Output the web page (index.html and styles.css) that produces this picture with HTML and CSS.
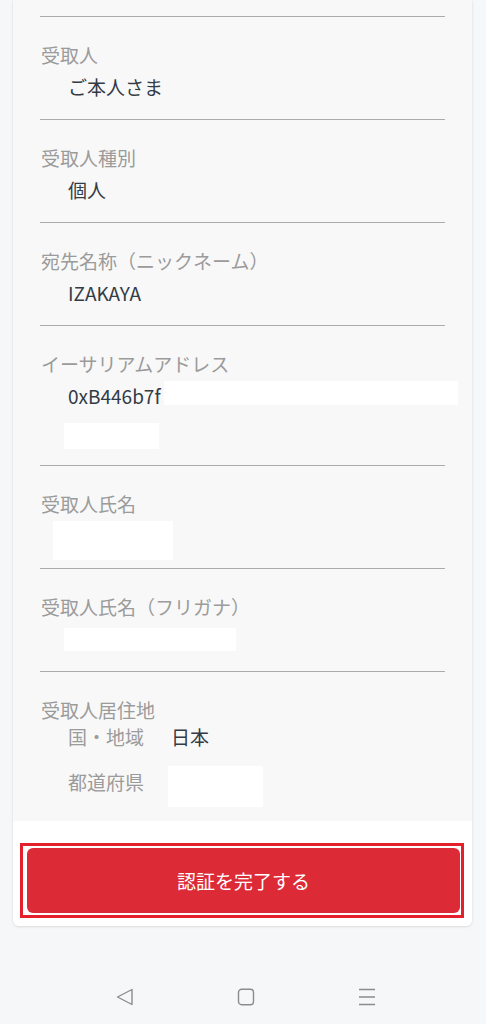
FILE: index.html
```html
<!DOCTYPE html>
<html lang="ja">
<head>
<meta charset="utf-8">
<title>認証</title>
<link rel="stylesheet" href="styles.css">
</head>
<body>
<main class="card">
  <div class="fields">
    <section class="field">
      <div class="label">受取人</div>
      <div class="value">ご本人さま</div>
    </section>
    <section class="field">
      <div class="label">受取人種別</div>
      <div class="value">個人</div>
    </section>
    <section class="field">
      <div class="label">宛先名称（ニックネーム）</div>
      <div class="value">IZAKAYA</div>
    </section>
    <section class="field">
      <div class="label">イーサリアムアドレス</div>
      <div class="value value-address">
        <div class="addr-line"><span>0xB446b7f</span><span class="redact redact-addr1"></span></div>
        <span class="redact redact-addr2"></span>
      </div>
    </section>
    <section class="field">
      <div class="label">受取人氏名</div>
      <span class="redact redact-name"></span>
    </section>
    <section class="field">
      <div class="label">受取人氏名（フリガナ）</div>
      <span class="redact redact-kana"></span>
    </section>
    <section class="field field-residence">
      <div class="label">受取人居住地</div>
      <div class="sub-row">
        <span class="sub-key">国・地域</span>
        <span class="sub-value">日本</span>
      </div>
      <div class="sub-row sub-row-pref">
        <span class="sub-key">都道府県</span>
        <span class="redact redact-pref"></span>
      </div>
    </section>
  </div>
  <div class="footer">
    <div class="highlight">
      <button class="submit" type="button">認証を完了する</button>
    </div>
  </div>
</main>
<nav class="sysnav">
  <svg class="nav-icon" width="18" height="18" viewBox="0 0 18 18"><path d="M16 1.5 L1.5 9 L16 16.5 Z" fill="none" stroke="#8c8c8c" stroke-width="1.4" stroke-linejoin="round"/></svg>
  <svg class="nav-icon" width="18" height="18" viewBox="0 0 18 18"><rect x="1.5" y="1.2" width="15" height="15.5" rx="3.2" fill="none" stroke="#8c8c8c" stroke-width="1.4"/></svg>
  <svg class="nav-icon" width="18" height="18" viewBox="0 0 18 18"><path d="M1 1.5 H17 M1 9 H17 M1 16.5 H17" fill="none" stroke="#8c8c8c" stroke-width="1.4"/></svg>
</nav>
</body>
</html>
```

FILE: styles.css
```css
* {
  box-sizing: border-box;
}

html, body {
  margin: 0;
  padding: 0;
}

body {
  background: #f6f7f9;
  font-family: "Noto Sans CJK JP", "Noto Sans", sans-serif;
  width: 486px;
  height: 1024px;
  overflow: hidden;
}

.card {
  margin-left: 13px;
  width: 459px;
  background: #f8f8f8;
  border-radius: 0 0 6px 6px;
  box-shadow: 0 1px 3px rgba(0, 0, 0, 0.10), 0 0 2px rgba(0, 0, 0, 0.05);
  overflow: hidden;
}

.fields {
  padding: 16px 27px 0 27px;
}

.field {
  border-top: 1px solid #ababab;
  padding-top: 22px;
}

.label {
  font-size: 19px;
  line-height: 32px;
  color: #9b9b9b;
  padding-left: 1px;
}

.value {
  font-size: 19px;
  line-height: 32px;
  color: #333b45;
  padding-left: 28px;
  padding-bottom: 16px;
}

.redact {
  display: block;
  background: #ffffff;
  flex-shrink: 0;
}

.addr-line {
  display: flex;
  align-items: center;
  height: 32px;
}

.redact-addr1 {
  display: inline-block;
  width: 294px;
  height: 24px;
  margin-left: 3px;
  margin-top: -6px;
}

.redact-addr2 {
  width: 95px;
  height: 26px;
  margin-top: 11px;
  margin-left: -4px;
}

.redact-name {
  width: 120px;
  height: 39px;
  margin: 1px 0 8px 13px;
}

.redact-kana {
  width: 172px;
  height: 23px;
  margin: 5px 0 20px 24px;
}

.field-residence {
  padding-bottom: 14px;
}

.sub-row {
  display: flex;
  padding-left: 28px;
  font-size: 19px;
  line-height: 22px;
}

.sub-key {
  width: 100px;
  color: #9b9b9b;
}

.sub-value {
  color: #333b45;
  padding-left: 3px;
}

.sub-row-pref {
  margin-top: 18px;
  align-items: flex-start;
  line-height: 32px;
}

.redact-pref {
  width: 95px;
  height: 41px;
}

.footer {
  background: #ffffff;
  padding: 22px 8px 8px 7px;
}

.highlight {
  border: 3px solid #e3202c;
  background: #ffffff;
  padding: 2px 1px 2px 4px;
}

.submit {
  display: block;
  width: 100%;
  height: 65px;
  border: none;
  border-radius: 6px;
  background: #dc2a37;
  color: #ffffff;
  font-family: "Noto Sans CJK JP", "Noto Sans", sans-serif;
  font-size: 19px;
  letter-spacing: 0;
  padding: 0;
}

.sysnav {
  display: flex;
  justify-content: center;
  gap: 103px;
  padding-top: 62px;
  padding-left: 6px;
}

.nav-icon {
  display: block;
}
```
